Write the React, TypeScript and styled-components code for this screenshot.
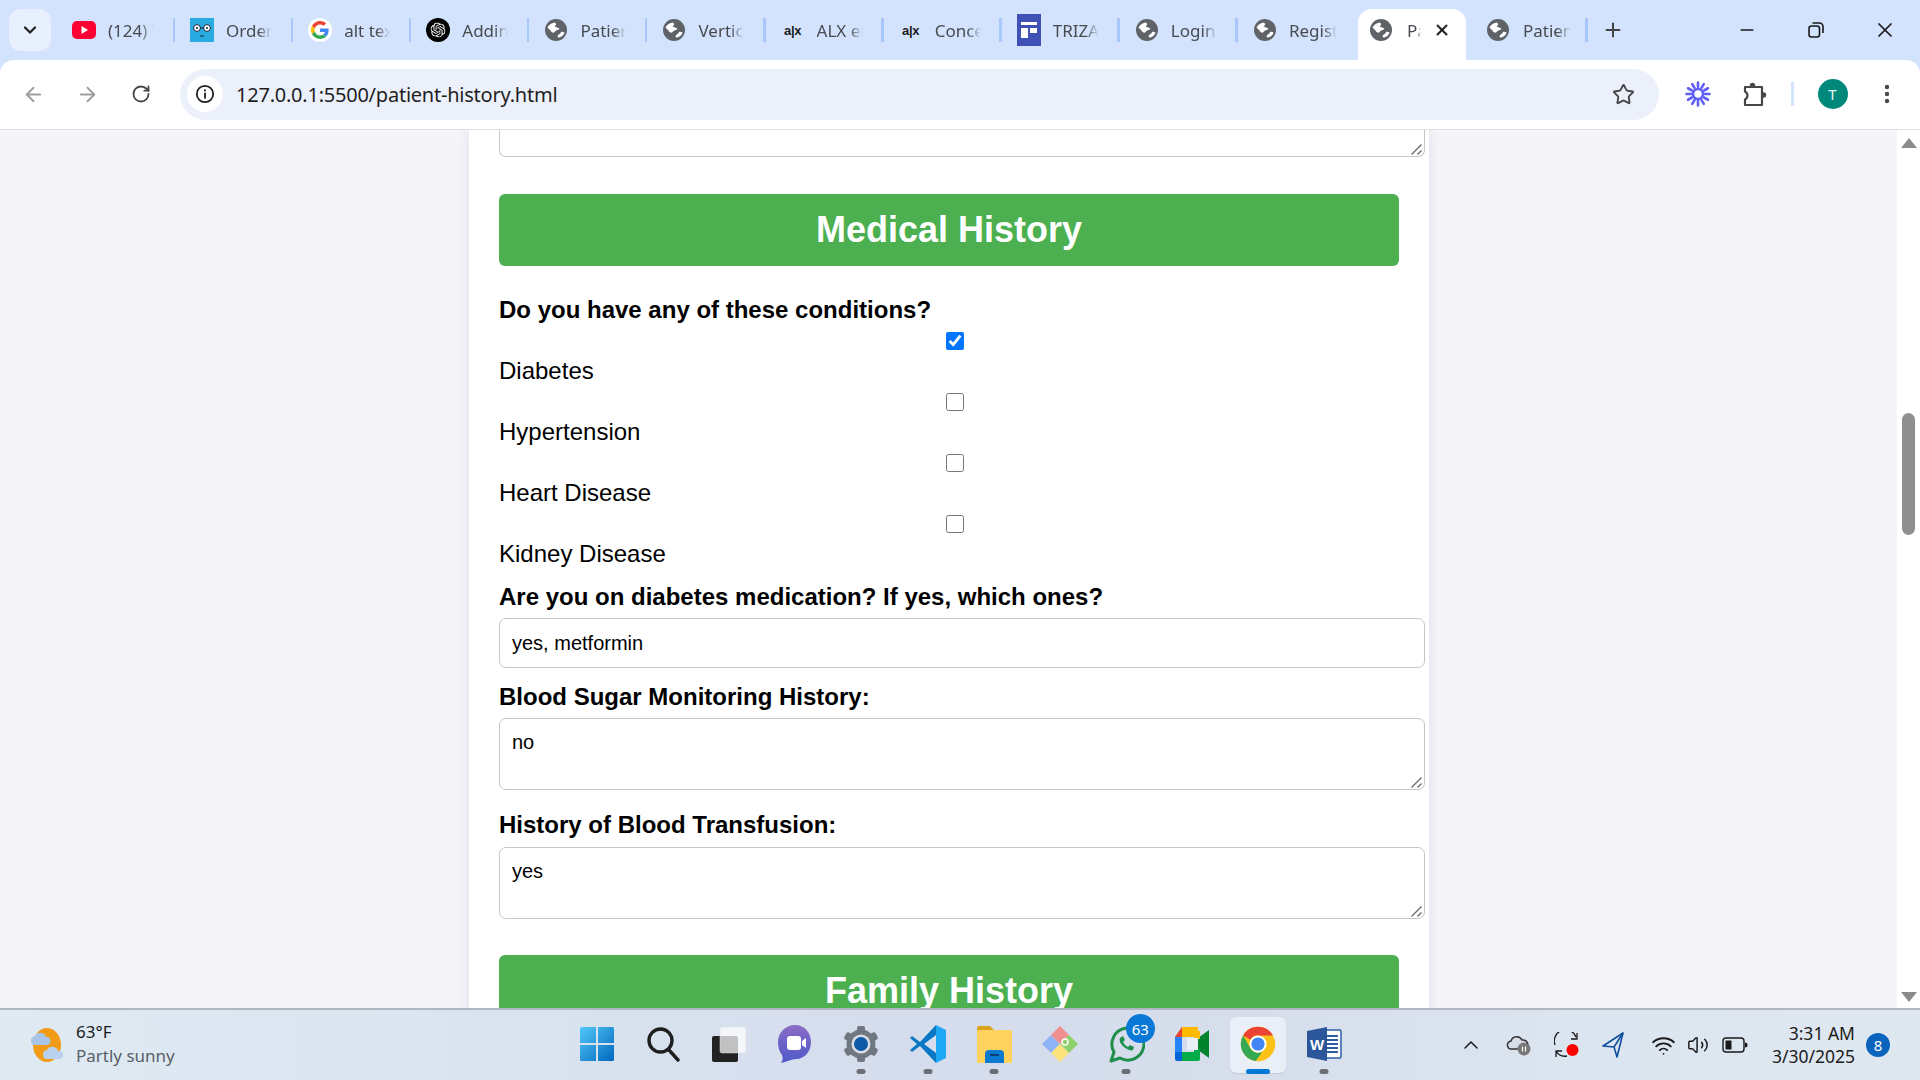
import React from "react";
import styled, { createGlobalStyle } from "styled-components";
import { ArrowLeft, ArrowRight, ChevronDown, ChevronUp, Minus, MoreVertical, Plus, RotateCw, Star, Volume2, Wifi, X } from "lucide-react";
import { SiOpenai } from "react-icons/si";

const Global = createGlobalStyle`
  html, body { margin: 0; padding: 0; width: 1920px; height: 1080px; overflow: hidden; }
  * { box-sizing: border-box; }
`;

const Screen = styled.div`
  width: 1920px; height: 1080px; display: flex; flex-direction: column; overflow: hidden;
  background: #d3e3fd; font-family: "Liberation Sans", Arial, sans-serif;
`;

/* ---------- tab strip ---------- */
const TabStrip = styled.div`
  height: 60px; flex: none; display: flex; align-items: flex-start; padding-left: 9px; background: #d3e3fd;
`;
const TabMenu = styled.div`
  width: 42px; height: 42px; flex: none; margin: 9px 5px 0 0; border-radius: 12px; background: #e9f0fd;
  display: flex; align-items: center; justify-content: center; color: #1f1f1f;
`;
const Tab = styled.div<{ $w: number; $pad: number; $gap: number; $sep?: boolean; $active?: boolean }>`
  position: relative; flex: none; width: ${p => p.$w}px; height: ${p => (p.$active ? 51 : 42)}px; margin-top: 9px;
  padding-left: ${p => p.$pad}px; display: flex; align-items: center; padding-bottom: ${p => (p.$active ? 9 : 0)}px; gap: ${p => p.$gap}px;
  background: ${p => (p.$active ? "#fff" : "transparent")}; border-radius: 14px 14px 0 0;
  &::after {
    content: ""; display: ${p => (p.$sep ? "block" : "none")}; position: absolute; right: -1px; top: 9px; width: 2.5px; height: 24px; background: #a8c7fa;
  }
`;
const TabIconBox = styled.span`
  flex: none; width: 24px; height: 24px; display: flex; align-items: center; justify-content: center;
`;
const TabTitle = styled.span<{ $w: number }>`
  width: ${p => p.$w}px; flex: none; overflow: hidden; white-space: nowrap; color: #474a4f;
  font: 17px "Noto Sans", sans-serif; -webkit-mask-image: linear-gradient(90deg, #000 70%, transparent 100%);
  mask-image: linear-gradient(90deg, #000 70%, transparent 100%);
`;
const TabClose = styled.span`
  flex: none; display: flex; margin-left: -2px; color: #1f1f1f;
`;
const AlxMark = styled.span`
  font: 900 13px "Liberation Sans", sans-serif; color: #1b1b1b; letter-spacing: -0.3px;
`;
const NewTab = styled.div`
  width: 52px; height: 60px; flex: none; display: flex; align-items: center; justify-content: center; color: #444; margin-right: 74px;
`;
const WinBtn = styled.div`
  width: 69px; height: 60px; flex: none; display: flex; align-items: center; justify-content: center; color: #1a1a1a;
`;

/* ---------- toolbar ---------- */
const Toolbar = styled.div`
  height: 70px; flex: none; display: flex; align-items: center; background: #fff; border-radius: 14px 14px 0 0;
  border-bottom: 1px solid #e1e1e1; padding: 0 0 1px 6px;
`;
const NavBtn = styled.div<{ $dim?: boolean }>`
  width: 54px; height: 50px; flex: none; display: flex; align-items: center; justify-content: center; color: ${p => (p.$dim ? "#9c9ea1" : "#474747")};
`;
const Omnibox = styled.div`
  width: 1479px; height: 51px; flex: none; margin-left: 12px; background: #ebf0fa; border-radius: 26px; display: flex; align-items: center; padding: 0 24px 0 7px;
`;
const InfoBadge = styled.div`
  width: 36px; height: 36px; border-radius: 50%; background: #fff; display: flex; align-items: center; justify-content: center;
`;
const Url = styled.div`
  margin-left: 13px; flex: 1; color: #1f1f1f; font: 20px "Noto Sans", sans-serif; letter-spacing: -0.23px;
`;
const ExtBtn = styled.div<{ $w: number }>`
  width: ${p => p.$w}px; height: 50px; display: flex; align-items: center; justify-content: center; color: #474747; flex: none;
`;
const ToolDivider = styled.div`
  width: 2.5px; height: 24px; background: #d3e3fd; flex: none; margin: 0 12px 0 20px;
`;
const Avatar = styled.div`
  width: 30px; height: 30px; border-radius: 50%; background: #00897b; color: #e6f5f2; display: flex; align-items: center; justify-content: center;
  font: 15px "Noto Sans", sans-serif; flex: none; margin-left: 12px; margin-right: 25px;
`;

/* ---------- page ---------- */
const Viewport = styled.div`
  flex: 1; min-height: 0; display: flex; background: #f4f4f9; overflow: hidden;
`;
const PageArea = styled.div`
  flex: 1; display: flex; justify-content: center; overflow: hidden;
`;
const Card = styled.div`
  width: 960px; margin-left: 1px; flex: none; background: #fff; padding: 0 30px; box-shadow: 0 0 12px rgba(40, 40, 70, 0.1); height: 900px;
`;
const Scrollbar = styled.div`
  width: 23px; flex: none; background: #fff; display: flex; flex-direction: column; align-items: center; color: #8a8a8a; padding-top: 8px;
`;
const ScrollThumb = styled.div`
  width: 13px; height: 122px; background: #8f8f8f; border-radius: 7px; margin-top: 265px; margin-bottom: auto;
`;
const ScrollUp = styled.div`
  width: 0; height: 0; border-left: 8px solid transparent; border-right: 8px solid transparent; border-bottom: 10px solid #8a8a8a;
`;
const ScrollDown = styled(ScrollUp)`
  border-bottom: none; border-top: 10px solid #8a8a8a; margin-bottom: 6px;
`;
const SectionBanner = styled.h2<{ $mt: number }>`
  margin: ${p => p.$mt}px 0 0; width: 900px; height: 72px; flex: none; background: #4caf50; border-radius: 6px; color: #fff; text-align: center;
  font: bold 36px/72px "Liberation Sans", sans-serif;
`;
const FieldLabel = styled.label<{ $mt: number }>`
  display: block; margin-top: ${p => p.$mt}px; font: bold 24px/28px "Liberation Sans", sans-serif; color: #000;
`;
const Condition = styled.div`
  display: flex; flex-direction: column; height: 61px; padding-top: 8px;
`;
const CheckWrap = styled.div`
  width: 912px; height: 18px; display: flex; justify-content: center; margin-bottom: 7px; flex: none;
`;
const Check = styled.input`
  width: 18px; height: 18px; margin: 0;
`;
const ConditionName = styled.span`
  font: 24px/28px "Liberation Sans", sans-serif; color: #000;
`;
const TextInput = styled.input`
  display: block; width: 926px; height: 50px; margin: 7px 0 0; padding: 0 12px; border: 1px solid #c6c6c6; border-radius: 7px; outline: none; background: #fff;
  font: 20px "Liberation Sans", sans-serif; color: #000;
`;
const AreaWrap = styled.div<{ $mt: number }>`
  position: relative; width: 926px; margin-top: ${p => p.$mt}px;
`;
const TextArea = styled.textarea<{ $clip?: boolean }>`
  display: block; width: 926px; height: ${p => (p.$clip ? 27 : 72)}px; margin: 0; padding: 11px 12px; border: 1px solid #c6c6c6;
  ${p => (p.$clip ? "border-top: none; border-radius: 0 0 7px 7px;" : "border-radius: 7px;")}
  outline: none; resize: none; background: #fff; font: 20px/24px "Liberation Sans", sans-serif; color: #000; overflow: hidden;
`;
const GripMark = styled.svg`
  position: absolute; right: 3px; bottom: 2px; width: 11px; height: 11px;
`;

/* ---------- taskbar ---------- */
const Taskbar = styled.div`
  height: 72px; flex: none; display: flex; align-items: center; border-top: 2px solid #b1b5bf;
  background: linear-gradient(90deg, #dfeaf3 0%, #d9e4f0 25%, #d5dcec 50%, #d6deec 65%, #dce6f0 85%, #dfe8f1 100%);
`;
const Weather = styled.div`
  width: 564px; flex: none; display: flex; align-items: center; padding-left: 27px; gap: 11px;
`;
const WeatherText = styled.div`
  display: flex; flex-direction: column; gap: 3px; font: 17px/21px "Noto Sans", sans-serif; color: #1b1b1b; margin-top: -3px;
`;
const WeatherSub = styled.span`
  color: #5a5f66;
`;
const TaskIcons = styled.div`
  display: flex; align-items: center;
`;
const TaskSlot = styled.div<{ $active?: boolean; $dot?: boolean }>`
  position: relative; width: 66.1px; flex: none; height: 56px; display: flex; align-items: center; justify-content: center; padding-bottom: 2px;
  &::before {
    content: ""; display: ${p => (p.$active ? "block" : "none")}; position: absolute; left: 5px; right: 5px; top: 0; bottom: 0; background: #e9eef7; border-radius: 6px; box-shadow: 0 1px 1px rgba(0,0,0,.1);
  }
  &::after {
    content: ""; display: ${p => (p.$dot || p.$active ? "block" : "none")}; position: absolute; left: 50%; transform: translateX(-50%); bottom: -1px;
    width: ${p => (p.$active ? 24 : 9)}px; height: 5px; border-radius: 3px; background: ${p => (p.$active ? "#0078d4" : "#6b6f75")};
  }
  & > svg { position: relative; }
`;
const CountBadge = styled.span`
  position: absolute; top: -3px; right: 4px; width: 29px; height: 29px; border-radius: 50%; background: #0a78d7; color: #fff; display: flex; align-items: center; justify-content: center;
  font: 15px "Noto Sans", sans-serif;
`;
const Tray = styled.div`
  margin-left: auto; display: flex; align-items: center; padding-right: 30px;
`;
const TraySlot = styled.div<{ $w: number }>`
  width: ${p => p.$w}px; height: 40px; flex: none; display: flex; align-items: center; justify-content: center; color: #1a1a1a;
`;
const Clock = styled.div`
  width: 94px; flex: none; white-space: nowrap; text-align: right; font: 17.5px/23px "Noto Sans", sans-serif; color: #1b1b1b;
`;
const NotifBadge = styled.div`
  width: 24px; height: 24px; flex: none; margin-left: 11px; border-radius: 50%; background: #0a64bd; color: #fff; display: flex; align-items: center; justify-content: center;
  font: 15px "Noto Sans", sans-serif;
`;

/* ---------- drawings ---------- */
const Grip = () => (
  <GripMark viewBox="0 0 11 11" stroke="#666" strokeWidth="1.300"><path d="M0.500 10.500L10.500 0.500M6.500 10.500L10.500 6.500" /></GripMark>
);
const Globe = () => (
  <svg width="24" height="24" viewBox="0 0 24 24"><circle cx="12" cy="12" r="11" fill="#5f6368" /><path d="M3.500 9.500C5 6.500 8 4.800 11 4.500c1.500 1 1.500 3-.5 4 1.500 1 4 .5 5 2.500-1.500 1.500-4 1-5 3-1 1.500-3 .5-4-1.500z" fill="#fff" /><path d="M13.500 18.500c.5-2.500 3-2 3.500-4.500 1-.5 2.500 0 3.500.5-.5 2.500-3.500 5-6 5z" fill="#fff" /></svg>
);
const YouTube = () => (
  <svg width="24" height="18" viewBox="0 0 24 18"><rect width="24" height="18" rx="5" fill="#ff0033" /><path d="M9.500 5l6.500 4-6.500 4z" fill="#fff" /></svg>
);
const OrderIcon = () => (
  <svg width="24" height="24" viewBox="0 0 24 24"><rect width="24" height="24" fill="#29abe2" /><circle cx="7" cy="10" r="3.400" fill="#fff" stroke="#123" strokeWidth="1" /><circle cx="17" cy="10" r="3.400" fill="#fff" stroke="#123" strokeWidth="1" /><circle cx="7" cy="10" r="1" fill="#123" /><circle cx="17" cy="10" r="1" fill="#123" /><path d="M10.400 10h3.200M10 18h4" stroke="#123" strokeWidth="1" /></svg>
);
const GoogleG = () => (
  <svg width="24" height="24" viewBox="-8 -8 64 64"><circle cx="24" cy="24" r="32" fill="#fff" /><path fill="#EA4335" d="M24 9.500c3.540 0 6.710 1.220 9.210 3.600l6.850-6.850C35.900 2.380 30.470 0 24 0 14.620 0 6.510 5.380 2.560 13.220l7.980 6.190C12.430 13.720 17.740 9.500 24 9.500z" /><path fill="#4285F4" d="M46.980 24.550c0-1.570-.15-3.090-.38-4.550H24v9.020h12.940c-.58 2.960-2.260 5.480-4.780 7.180l7.730 6c4.510-4.180 7.090-10.360 7.090-17.650z" /><path fill="#FBBC05" d="M10.530 28.590c-.48-1.450-.76-2.990-.76-4.590s.27-3.140.76-4.590l-7.980-6.190C.92 16.460 0 20.120 0 24c0 3.880.92 7.540 2.560 10.780l7.970-6.190z" /><path fill="#34A853" d="M24 48c6.480 0 11.930-2.130 15.890-5.810l-7.730-6c-2.150 1.450-4.920 2.300-8.160 2.300-6.260 0-11.570-4.220-13.470-9.910l-7.980 6.190C6.510 42.620 14.620 48 24 48z" /></svg>
);
const OpenAi = () => (
  <svg width="24" height="24" viewBox="0 0 24 24"><circle cx="12" cy="12" r="12" fill="#000" /><g transform="translate(4.500 4.500) scale(.625)"><SiOpenai size={24} color="#fff" /></g></svg>
);
const Triza = () => (
  <svg width="24" height="32" viewBox="0 0 24 32"><rect width="24" height="32" fill="#3f51b5" /><rect x="4" y="8" width="16" height="3" fill="#fff" /><rect x="4" y="14" width="7" height="10" fill="#fff" /><rect x="13" y="14" width="7" height="5" fill="#fff" /></svg>
);
const InfoIcon = () => (
  <svg width="20" height="20" viewBox="0 0 20 20"><circle cx="10" cy="10" r="8.200" fill="none" stroke="#1f1f1f" strokeWidth="1.800" /><rect x="9.100" y="8.600" width="1.800" height="6" fill="#1f1f1f" /><rect x="9.100" y="5.400" width="1.800" height="1.900" fill="#1f1f1f" /></svg>
);
const Burst = () => (
  <svg width="26" height="26" viewBox="0 0 26 26" stroke="#5f5ff5" strokeWidth="2.600" strokeLinecap="round">
    <circle cx="13" cy="13" r="5" fill="none" />
    {[0, 30, 60, 90, 120, 150, 180, 210, 240, 270, 300, 330].map(a => (
      <line key={a} x1="13" y1="6" x2="13" y2="1.500" transform={`rotate(${a} 13 13)`} />
    ))}
  </svg>
);
const ExtensionPiece = () => (
  <svg width="25" height="25" viewBox="0 0 25 25">
    <circle cx="10.500" cy="3.500" r="2.700" fill="#474747" /><circle cx="21.500" cy="13" r="2.700" fill="#474747" />
    <path d="M3 5H20V23H3V17.500a4.500 4.500 0 0 0 0-8z" fill="#fff" stroke="#474747" strokeWidth="2.200" strokeLinejoin="round" />
  </svg>
);
const Restore = () => (
  <svg width="16" height="16" viewBox="0 0 16 16" fill="none" stroke="#1a1a1a" strokeWidth="1.600"><rect x="1" y="4" width="10.500" height="11" rx="2.500" /><path d="M4.500 1h7A3.500 3.500 0 0 1 15 4.500V11" /></svg>
);
const WeatherIcon = () => (
  <svg width="38" height="38" viewBox="0 0 38 38">
    <ellipse cx="20" cy="19" rx="14" ry="17" fill="#f29b16" />
    <path d="M4 15a5 5 0 0 1 4-5 6 6 0 0 1 11 1 4 4 0 0 1 1 8H7a4 4 0 0 1-3-4z" fill="#a9c6e8" />
    <path d="M16 29a5 5 0 0 1 4-5 6 6 0 0 1 11 1 4 4 0 0 1 2 8H19a4 4 0 0 1-3-4z" fill="#b8d1ee" />
  </svg>
);
const WinLogo = () => (
  <svg width="36" height="36" viewBox="0 0 36 36">
    <defs><linearGradient id="w" x1="0" y1="0" x2="1" y2="1"><stop offset="0" stopColor="#52c8f7" /><stop offset="1" stopColor="#0067c0" /></linearGradient></defs>
    <path d="M1 2.500A1.500 1.500 0 0 1 2.500 1H17v16H1zM19 1h14.500A1.500 1.500 0 0 1 35 2.500V17H19zM1 19h16v16H2.500A1.500 1.500 0 0 1 1 33.500zM19 19h16v14.500a1.500 1.500 0 0 1-1.500 1.500H19z" fill="url(#w)" />
  </svg>
);
const SearchIcon = () => (
  <svg width="34" height="36" viewBox="0 0 34 36" fill="none" stroke="#1e1e1e" strokeWidth="3.400" strokeLinecap="round"><circle cx="14.500" cy="14.500" r="11.500" /><path d="M23 24l9 10" /></svg>
);
const TaskView = () => (
  <svg width="36" height="36" viewBox="0 0 36 36"><rect x="1" y="10" width="26" height="26" rx="2" fill="#222" /><rect x="9" y="1" width="26" height="26" rx="2" fill="#fff" fillOpacity=".72" stroke="#ddd" strokeWidth=".5" /></svg>
);
const MeetChat = () => (
  <svg width="36" height="40" viewBox="0 0 36 40"><defs><linearGradient id="mc" x1="0" y1="0" x2="0" y2="1"><stop offset="0" stopColor="#8a6bc6" /><stop offset="1" stopColor="#4f5bc8" /></linearGradient></defs><path d="M18 1c10 0 16 8 16 17s-6 17-15 17c-4 0-10 3-15 4 2-3 2-5 1-8C2 27 1 23 1 18 1 9 8 1 18 1z" fill="url(#mc)" /><rect x="10" y="12" width="14" height="14" rx="3" fill="#fff" /><path d="M25 17l4-3v10l-4-3z" fill="#fff" /></svg>
);
const Gear = () => (
  <svg width="38" height="38" viewBox="0 0 38 38">
    <g fill="#6f7780">{[0, 60, 120, 180, 240, 300].map(a => <rect key={a} x="15" y="1" width="8" height="9" rx="2" transform={`rotate(${a} 19 19)`} />)}</g>
    <circle cx="19" cy="19" r="14.500" fill="#6f7780" /><circle cx="19" cy="19" r="9.500" fill="#d9dee6" /><circle cx="19" cy="19" r="7" fill="#0f5aa8" />
  </svg>
);
const VsCode = () => (
  <svg width="38" height="40" viewBox="0 0 38 40">
    <path d="M27 1l10 5v28l-10 5z" fill="#1fa9f4" />
    <path d="M27 1L11 18 3 12l-2 2 7 6-7 6 2 2 8-6 16 17V29L15 20 27 11z" fill="#0a78c4" />
  </svg>
);
const Files = () => (
  <svg width="36" height="40" viewBox="0 0 36 40">
    <path d="M1 4a2 2 0 0 1 2-2h11l4 4h16v6H1z" fill="#d9a21b" /><rect x="1" y="6" width="35" height="33" rx="1.500" fill="#fdd25d" />
    <path d="M9 30a4 4 0 0 1 4-4h11a4 4 0 0 1 4 4v9H9z" fill="#0a7ad1" /><rect x="14" y="30" width="9" height="2" fill="#0b3e72" />
  </svg>
);
const GitExt = () => (
  <svg width="38" height="38" viewBox="0 0 38 38">
    <path d="M1 19l9-9 9 9-9 9z" fill="#8fb4f5" />
    <path d="M19 1l9 9-9 9-9-9z" fill="#ef8f8f" /><path d="M37 19l-9 9-9-9 9-9z" fill="#8ed06c" />
    <path d="M19 37l-9-9 9-9 9 9z" fill="#fbe27a" /><circle cx="24" cy="17" r="3" fill="none" stroke="#fff" strokeWidth="1.500" />
  </svg>
);
const WhatsApp = () => (
  <svg width="38" height="40" viewBox="0 0 38 40" fill="none"><path d="M4 37l3-9a16 16 0 1 1 6 6z" stroke="#1f8f4c" strokeWidth="3" strokeLinejoin="round" /><path d="M13 14c-1 2 0 6 4 9s7 4 9 3l1-3-4-2-2 2c-2-1-4-3-5-5l2-2-2-4z" fill="#1f8f4c" /></svg>
);
const GMeet = () => (
  <svg width="36" height="36" viewBox="0 0 36 36">
    <path d="M8 1h16v10H1z" fill="#ffba00" /><path d="M1 11h7v15H1z" fill="#2684fc" /><path d="M8 1v10H1z" fill="#ea4335" /><path d="M1 26h7v9H3a2 2 0 0 1-2-2z" fill="#0066da" />
    <path d="M8 26h16v9H8z" fill="#00ac47" /><path d="M24 12l11-8v28l-11-8z" fill="#00832d" /><path d="M20 5h6v8h-6z" fill="#ffba00" /><path d="M20 23h6v10a2 2 0 0 1-2 2h-4z" fill="#00ac47" /><rect x="13" y="12" width="11" height="12" fill="#e9eef7" />
  </svg>
);
const Chrome = () => (
  <svg width="36" height="36" viewBox="0 0 48 48">
    <circle cx="24" cy="24" r="23" fill="#fbc116" />
    <path d="M4.100 12.500A23 23 0 0 1 43.900 12.500H24a11.500 11.500 0 0 0-10 5.800z" fill="#ea4335" />
    <path d="M4.100 12.500A23 23 0 0 0 21 46.800L30 34a11.500 11.500 0 0 1-16-4z" fill="#34a853" />
    <circle cx="24" cy="24" r="11.500" fill="#fff" /><circle cx="24" cy="24" r="8.800" fill="#4285f4" />
  </svg>
);
const Word = () => (
  <svg width="36" height="36" viewBox="0 0 36 36">
    <rect x="14" y="4" width="21" height="28" rx="1" fill="#fff" stroke="#2c5ea6" strokeWidth="1.500" /><path d="M19 10h13M19 14h13M19 18h13M19 22h13M19 26h13" stroke="#2c5ea6" strokeWidth="1.800" />
    <path d="M1 5l20-4v34L1 31z" fill="#2b579a" /><text x="11" y="24" fill="#fff" fontSize="15" fontWeight="bold" fontFamily="Liberation Sans" textAnchor="middle">W</text>
  </svg>
);
const CloudPause = () => (
  <svg width="26" height="24" viewBox="0 0 26 24"><path d="M2 14a4 4 0 0 1 3-6 6 6 0 0 1 11-1 5 5 0 0 1 6 5v4H5a3 3 0 0 1-3-2z" fill="#d7dde6" stroke="#333" strokeWidth="1.500" /><circle cx="18" cy="16" r="6.500" fill="#777" /><path d="M16.500 13.500v5M19.500 13.500v5" stroke="#fff" strokeWidth="1.200" /></svg>
);
const SyncDot = () => (
  <svg width="26" height="26" viewBox="0 0 26 26" fill="none" stroke="#1a1a1a" strokeWidth="1.300"><path d="M1 13A10.500 10.500 0 0 1 22 5M23 1v6h-6M2 25v-6h6M2 19a10.500 10.500 0 0 0 11 5" /><circle cx="18.500" cy="18" r="6" fill="#f00" stroke="none" /></svg>
);
const SendArrow = () => (
  <svg width="22" height="26" viewBox="0 0 22 26" fill="none" stroke="#0f4ea0" strokeWidth="1.600" strokeLinejoin="round"><path d="M21 1L1 14l11 1 3 10z" /><path d="M21 1L12 15" /></svg>
);
const Battery = () => (
  <svg width="26" height="16" viewBox="0 0 26 16"><rect x="1" y="1" width="21" height="14" rx="3" fill="none" stroke="#1a1a1a" strokeWidth="1.400" /><rect x="3.500" y="3.500" width="6" height="9" fill="#1a1a1a" /><path d="M23 5.500a2.500 2.500 0 0 1 0 5z" fill="#1a1a1a" /></svg>
);

const tabs: { title: string; icon: React.ReactNode }[] = [
  { title: "(124) YouTube", icon: <YouTube /> },
  { title: "Orders", icon: <OrderIcon /> },
  { title: "alt text", icon: <GoogleG /> },
  { title: "Adding", icon: <OpenAi /> },
  { title: "Patient", icon: <Globe /> },
  { title: "Vertical", icon: <Globe /> },
  { title: "ALX elevate", icon: <AlxMark>a|x</AlxMark> },
  { title: "Concepts", icon: <AlxMark>a|x</AlxMark> },
  { title: "TRIZA", icon: <Triza /> },
  { title: "Login", icon: <Globe /> },
  { title: "Register", icon: <Globe /> },
];

export default function App() {
  return (
    <Screen>
      <Global />
      <TabStrip>
        <TabMenu><ChevronDown size={20} strokeWidth={2.6} /></TabMenu>
        {tabs.map((t, i) => (
          <Tab key={t.title} $w={i === 10 ? 121 : 118.1} $pad={16} $gap={12} $sep={i < 10}>
            <TabIconBox>{t.icon}</TabIconBox>
            <TabTitle $w={i === 10 ? 48 : 46}>{t.title}</TabTitle>
          </Tab>
        ))}
        <Tab $w={108} $pad={11} $gap={14} $active>
          <TabIconBox><Globe /></TabIconBox>
          <TabTitle $w={14}>Patient</TabTitle>
          <TabClose><X size={18} strokeWidth={2.6} /></TabClose>
        </Tab>
        <Tab $w={121} $pad={20} $gap={13} $sep>
          <TabIconBox><Globe /></TabIconBox>
          <TabTitle $w={48}>Patient</TabTitle>
        </Tab>
        <NewTab><Plus size={22} strokeWidth={2.2} /></NewTab>
        <WinBtn><Minus size={20} strokeWidth={1.8} /></WinBtn>
        <WinBtn><Restore /></WinBtn>
        <WinBtn><X size={24} strokeWidth={1.7} /></WinBtn>
      </TabStrip>

      <Toolbar>
        <NavBtn $dim><ArrowLeft size={23} strokeWidth={2} /></NavBtn>
        <NavBtn $dim><ArrowRight size={23} strokeWidth={2} /></NavBtn>
        <NavBtn><RotateCw size={20} strokeWidth={2.2} /></NavBtn>
        <Omnibox>
          <InfoBadge><InfoIcon /></InfoBadge>
          <Url>127.0.0.1:5500/patient-history.html</Url>
          <Star size={23} strokeWidth={2} color="#474747" />
        </Omnibox>
        <ExtBtn $w={78}><Burst /></ExtBtn>
        <ExtBtn $w={34}><ExtensionPiece /></ExtBtn>
        <ToolDivider />
        <Avatar>T</Avatar>
        <ExtBtn $w={28}><MoreVertical size={24} strokeWidth={2.4} /></ExtBtn>
      </Toolbar>

      <Viewport>
        <PageArea>
          <Card>
            <AreaWrap $mt={0}>
              <TextArea $clip readOnly defaultValue="" />
              <Grip />
            </AreaWrap>
            <SectionBanner $mt={37}>Medical History</SectionBanner>
            <FieldLabel $mt={30}>Do you have any of these conditions?</FieldLabel>
            {["Diabetes", "Hypertension", "Heart Disease", "Kidney Disease"].map((c, i) => (
              <Condition key={c}>
                <CheckWrap><Check type="checkbox" defaultChecked={i === 0} /></CheckWrap>
                <ConditionName>{c}</ConditionName>
              </Condition>
            ))}
            <FieldLabel $mt={15}>Are you on diabetes medication? If yes, which ones?</FieldLabel>
            <TextInput readOnly defaultValue="yes, metformin" />
            <FieldLabel $mt={15}>Blood Sugar Monitoring History:</FieldLabel>
            <AreaWrap $mt={7}>
              <TextArea readOnly defaultValue="no" />
              <Grip />
            </AreaWrap>
            <FieldLabel $mt={21}>History of Blood Transfusion:</FieldLabel>
            <AreaWrap $mt={8}>
              <TextArea readOnly defaultValue="yes" />
              <Grip />
            </AreaWrap>
            <SectionBanner $mt={36}>Family History</SectionBanner>
          </Card>
        </PageArea>
        <Scrollbar>
          <ScrollUp />
          <ScrollThumb />
          <ScrollDown />
        </Scrollbar>
      </Viewport>

      <Taskbar>
        <Weather>
          <WeatherIcon />
          <WeatherText>
            <span>63°F</span>
            <WeatherSub>Partly sunny</WeatherSub>
          </WeatherText>
        </Weather>
        <TaskIcons>
          <TaskSlot><WinLogo /></TaskSlot>
          <TaskSlot><SearchIcon /></TaskSlot>
          <TaskSlot><TaskView /></TaskSlot>
          <TaskSlot><MeetChat /></TaskSlot>
          <TaskSlot $dot><Gear /></TaskSlot>
          <TaskSlot $dot><VsCode /></TaskSlot>
          <TaskSlot $dot><Files /></TaskSlot>
          <TaskSlot><GitExt /></TaskSlot>
          <TaskSlot $dot><WhatsApp /><CountBadge>63</CountBadge></TaskSlot>
          <TaskSlot><GMeet /></TaskSlot>
          <TaskSlot $active><Chrome /></TaskSlot>
          <TaskSlot $dot><Word /></TaskSlot>
        </TaskIcons>
        <Tray>
          <TraySlot $w={40}><ChevronUp size={24} strokeWidth={1.5} /></TraySlot>
          <TraySlot $w={56}><CloudPause /></TraySlot>
          <TraySlot $w={40}><SyncDot /></TraySlot>
          <TraySlot $w={52}><SendArrow /></TraySlot>
          <TraySlot $w={48}><Wifi size={25} strokeWidth={1.8} /></TraySlot>
          <TraySlot $w={22}><Volume2 size={26} strokeWidth={1.6} /></TraySlot>
          <TraySlot $w={52}><Battery /></TraySlot>
          <Clock>3:31 AM<br />3/30/2025</Clock>
          <NotifBadge>8</NotifBadge>
        </Tray>
      </Taskbar>
    </Screen>
  );
}
